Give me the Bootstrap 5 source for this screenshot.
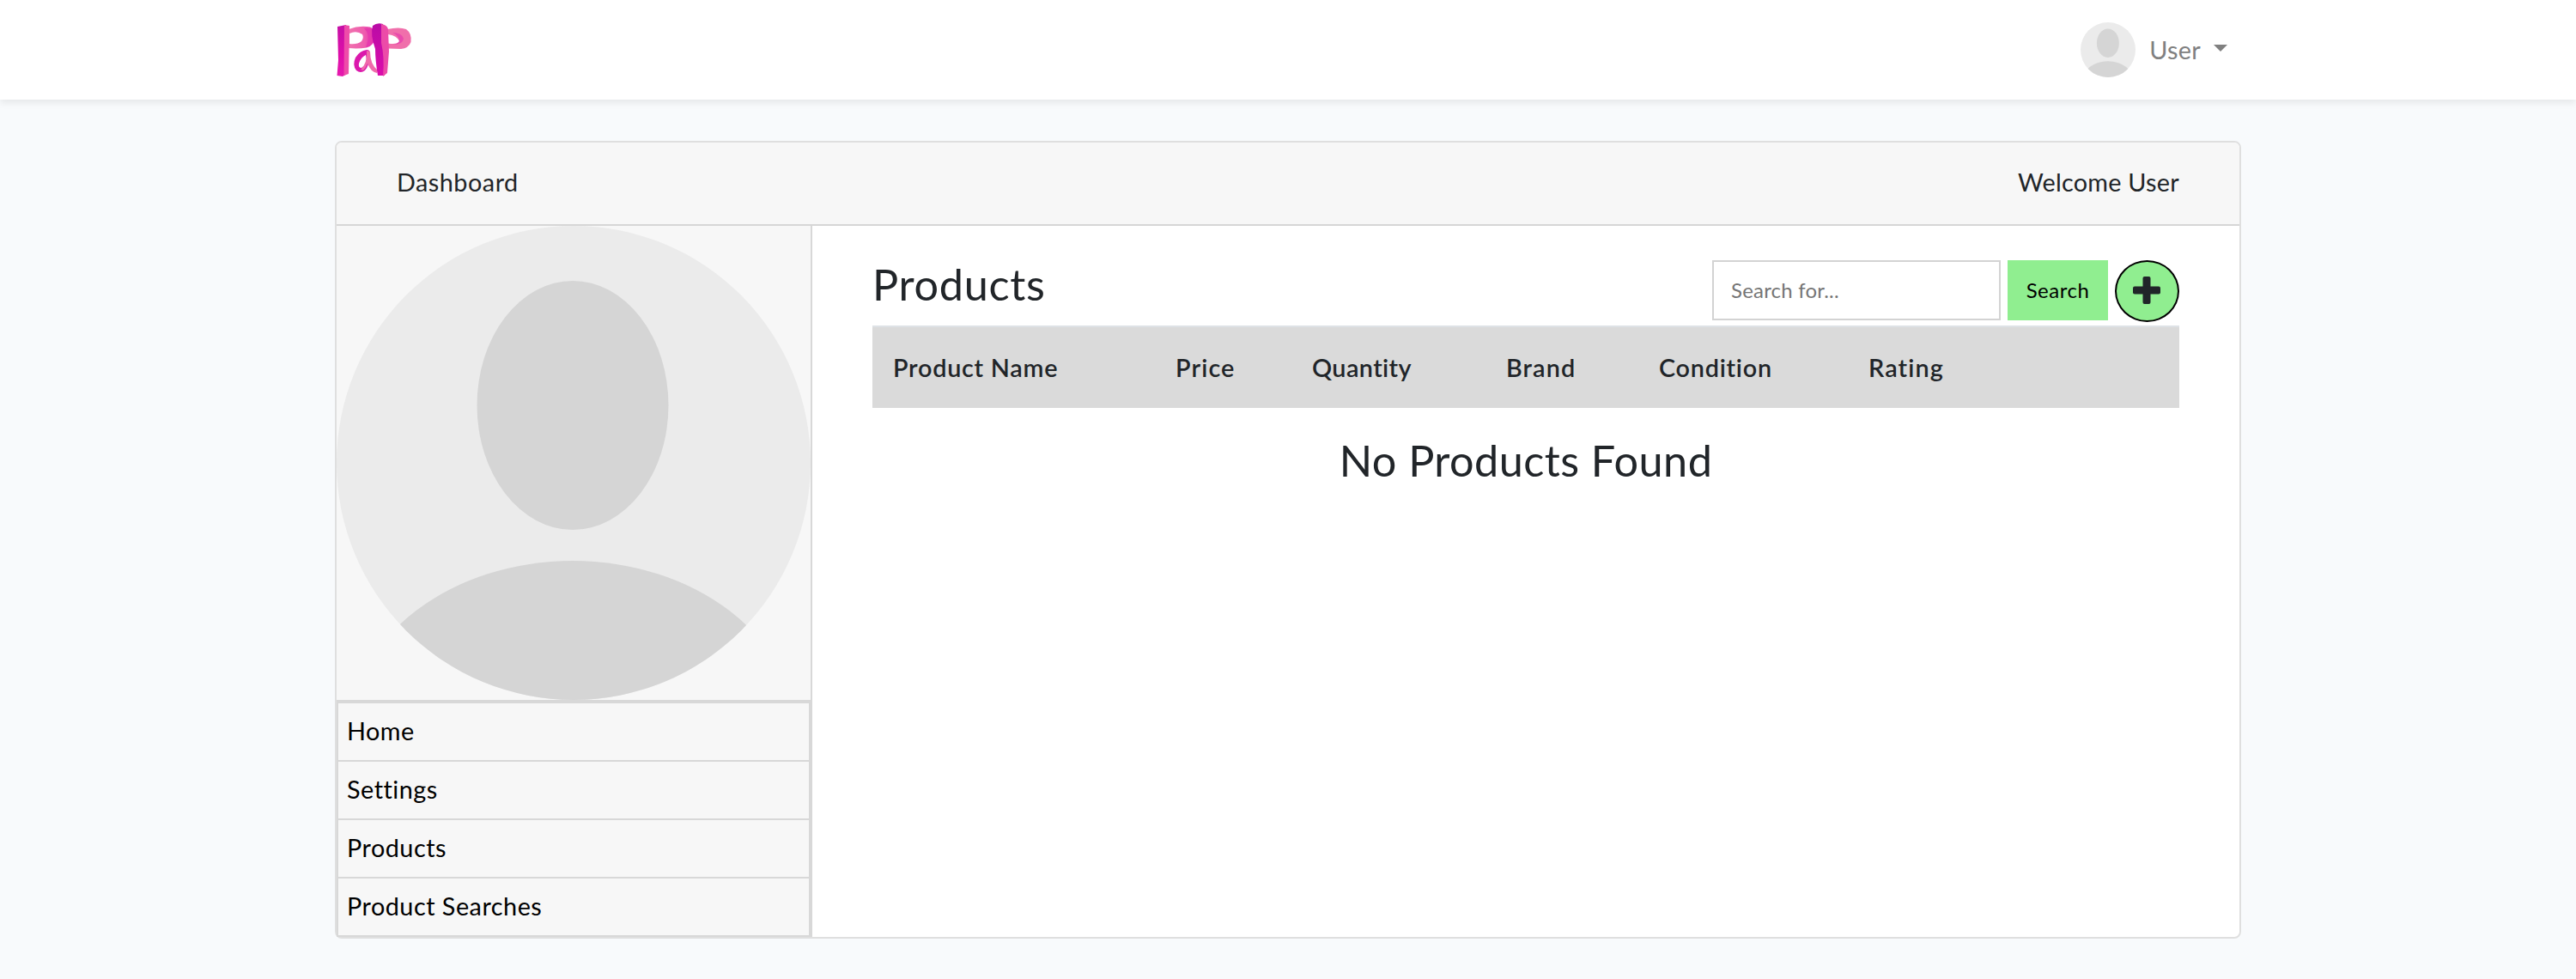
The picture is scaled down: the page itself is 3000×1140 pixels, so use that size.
<!DOCTYPE html>
<html lang="en">
<head>
<meta charset="utf-8">
<title>Dashboard</title>
<link href="https://cdn.jsdelivr.net/npm/bootstrap@5.3.0/dist/css/bootstrap.min.css" rel="stylesheet">
<style>
  body { font-family: Lato, "Open Sans", sans-serif; font-size: 28.8px; line-height: 46px; letter-spacing: .5px; color: #212529; background: #f8fafc; }
  .page-width { width: 2220px; max-width: none; }
  .site-nav { height: 116px; box-shadow: 0 4px 8px rgba(0,0,0,.075); }
  .user-toggle { color: #808080; letter-spacing: .25px; padding-right: 16px; }
  .user-toggle::after { margin-left: 15px; margin-bottom: 4px; border-width: 8.6px 8.6px 0; }
  .user-pic { margin-right: 16px; }
  .panel { --bs-card-border-width: 2px; --bs-card-border-color: #dfdfdf; --bs-card-border-radius: 8px; --bs-card-inner-border-radius: 6px; margin-top: 48px; }
  .panel-top { height: 97px; padding: 0 70px 3px; background: #f7f7f7; border-bottom: 2px solid #d6d6d6; border-radius: 6px 6px 0 0; }
  .welcome { letter-spacing: .25px; }
  .side { width: 554px; background: #f7f7f7; border-radius: 0 0 0 6px; }
  .side-pic { border-right: 2px solid #d8d8d8; }
  .side-menu { border: 2px solid #d8d8d8; border-width: 2px 2px 0 0; }
  .side-menu a { height: 68px; padding: 0 10px 3px; color: #000; border: 2px solid #d8d8d8; border-top: 0; }
  .side-menu li:first-child a { height: 70px; border-top: 2px solid #d8d8d8; }
  .main { padding: 40px 70px 0; }
  .title { font-size: 50.4px; line-height: 56px; letter-spacing: .7px; }
  .title.empty-note { letter-spacing: .43px; margin-top: 33px; }
  .tools { gap: 8px; }
  .find { width: 336px; height: 70px; border: 2px solid #d3d3d3; padding: 0 20px 2px; font-size: 24px; letter-spacing: .2px; }
  .find::placeholder { color: #757575; }
  .find-btn { width: 117px; height: 70px; background: #90ee90; font-size: 24px; border: 0; color: #000; padding: 0 0 1px; letter-spacing: .5px; }
  .add-btn { width: 75px; height: 72px; border: 2px solid #000; border-radius: 50%; background: #90ee90; padding: 0 1px 3px 0; }
  .list-head { table-layout: fixed; margin: 4px 0 0; }
  .list-head th { height: 95px; padding: 0 0 0 24px; border: 0; border-top: 2px solid #dee2e6; background: #dadada; color: #212529; font-weight: 600; vertical-align: middle; letter-spacing: .75px; }
  .c-name { width: 329px; } .c-price { width: 159px; } .c-qty { width: 226px; } .c-brand { width: 178px; } .c-cond { width: 244px; }
  .list-head .t-wide { letter-spacing: 1.1px; }
  .list-head .t-tight { letter-spacing: .4px; }
</style>
<script src="https://cdn.jsdelivr.net/npm/bootstrap@5.3.0/dist/js/bootstrap.bundle.min.js"></script>
</head>
<body>
<svg width="0" height="0" class="position-absolute" aria-hidden="true">
  <symbol id="person" viewBox="0 0 552 552">
    <clipPath id="disc"><circle cx="276" cy="276" r="276"/></clipPath>
    <g clip-path="url(#disc)">
      <rect width="552" height="552" fill="#ebebeb"/>
      <ellipse cx="275" cy="209" rx="111.500" ry="145" fill="#d5d5d5"/>
      <path d="M16 590 A259 200 0 0 1 534 590 Z" fill="#d5d5d5"/>
    </g>
  </symbol>
</svg>

<nav class="site-nav navbar bg-white p-0">
  <div class="page-width container-fluid p-0">
    <a class="navbar-brand p-0 m-0 d-flex" href="#" aria-label="Home">
      <svg width="92" height="68" viewBox="2 2 92 68">
        <defs>
          <linearGradient id="stemA" x1="0" y1="0" x2="0" y2="1"><stop offset="0" stop-color="#c50fa6"/><stop offset=".6" stop-color="#df0ea9"/><stop offset="1" stop-color="#e61aae"/></linearGradient>
          <linearGradient id="stemB" x1="0" y1="0" x2="0" y2="1"><stop offset="0" stop-color="#b90ba6"/><stop offset="1" stop-color="#db0dab"/></linearGradient>
          <linearGradient id="bowlA" x1="0" y1="0" x2="1" y2="0"><stop offset="0" stop-color="#f172ae"/><stop offset=".6" stop-color="#ee5cae"/><stop offset="1" stop-color="#e32fae"/></linearGradient>
        </defs>
        <path fill="url(#bowlA)" fill-rule="evenodd" d="M18 12 Q31 7 43 9.500 Q49 12 49 20 Q48 31 39 33.500 Q29 35 18 34 Z M19 17 L19 29 Q28 30 33 26 Q36 22 34 18 Q27 13 19 17 Z"/>
        <path fill="#e63aad" d="M36 11 Q44 18 38 33 Q48 31 49 21 Q48 9 36 11 Z"/>
        <path fill="url(#stemA)" d="M5 9 L15 7 L14.500 65 L11 67 L4.500 66 L6 48 Z"/>
        <path fill="#ee4ca9" d="M13 7 L19 8 L18 64 L12.500 66 Z"/>
        <path fill="#db18ac" fill-rule="evenodd" d="M39 36 Q43 36 43 40 Q42 55 37 60 Q32 64 27 60 Q22 54 26 45 Q31 37 39 36 Z M38 42 Q32 45 30 52 Q29 57 33 57 Q38 54 39 48 Z"/>
        <path fill="#f06bab" d="M39 37 L43 38 Q43 53 52 60 L51 63 Q44 62 40 52 Q38 57 35 60 L32 59 Q40 52 39 37 Z"/>
        <path fill="#f06fab" fill-rule="evenodd" d="M63 12 Q77 9 85 12 Q92 17 90.500 27 Q88 34 79 35 L64 34.500 Z M64 18 L64 28.500 Q73 30 78 27 Q74 19 64 18 Z"/>
        <path fill="#e94aad" d="M69 16 Q80 16 82 23 Q81 30 70 30 Q77 28 77 25 Q76 19 69 16 Z"/>
        <path fill="url(#stemB)" d="M46 8 Q51 4 58 6 L60 66 L52 66 Q49 48 49 35 Q43 18 46 8 Z"/>
        <path fill="#ec4ba8" d="M56 6 Q63 7 64 12 L65 38 L63 63 L58 67 Q60 45 56 28 Z"/>
      </svg>
    </a>
    <a class="user-toggle dropdown-toggle d-flex align-items-center text-decoration-none" href="#" data-bs-toggle="dropdown">
      <svg class="user-pic" width="64" height="64"><use href="#person"/></svg>User</a>
  </div>
</nav>

<main class="page-width container-fluid p-0">
  <section class="panel card">
    <header class="panel-top d-flex justify-content-between align-items-center">
      <span>Dashboard</span><span class="welcome">Welcome User</span>
    </header>
    <div class="d-flex">
      <aside class="side flex-shrink-0">
        <div class="side-pic"><svg class="d-block" width="552" height="552"><use href="#person"/></svg></div>
        <ul class="side-menu list-unstyled m-0">
          <li><a class="d-flex align-items-center text-decoration-none" href="#">Home</a></li>
          <li><a class="d-flex align-items-center text-decoration-none" href="#">Settings</a></li>
          <li><a class="d-flex align-items-center text-decoration-none" href="#">Products</a></li>
          <li><a class="d-flex align-items-center text-decoration-none" href="#">Product Searches</a></li>
        </ul>
      </aside>
      <div class="main flex-grow-1">
        <div class="d-flex justify-content-between align-items-start">
          <h3 class="title fw-normal m-0">Products</h3>
          <form class="tools d-flex">
            <input class="find form-control rounded-0" type="text" placeholder="Search for...">
            <button class="find-btn btn rounded-0" type="button">Search</button>
            <button class="add-btn btn d-flex align-items-center justify-content-center" type="button" aria-label="Add product">
              <svg width="32" height="32" viewBox="0 0 32 32" fill="#212529"><rect x="11.500" y="0" width="9" height="32" rx="2"/><rect x="0" y="11.500" width="32" height="9" rx="2"/></svg>
            </button>
          </form>
        </div>
        <table class="list-head table">
          <thead>
            <tr>
              <th class="c-name">Product Name</th>
              <th class="c-price t-wide">Price</th>
              <th class="c-qty t-tight">Quantity</th>
              <th class="c-brand t-wide">Brand</th>
              <th class="c-cond">Condition</th>
              <th class="t-wide">Rating</th>
            </tr>
          </thead>
        </table>
        <h3 class="title empty-note fw-normal text-center mb-0">No Products Found</h3>
      </div>
    </div>
  </section>
</main>
</body>
</html>
